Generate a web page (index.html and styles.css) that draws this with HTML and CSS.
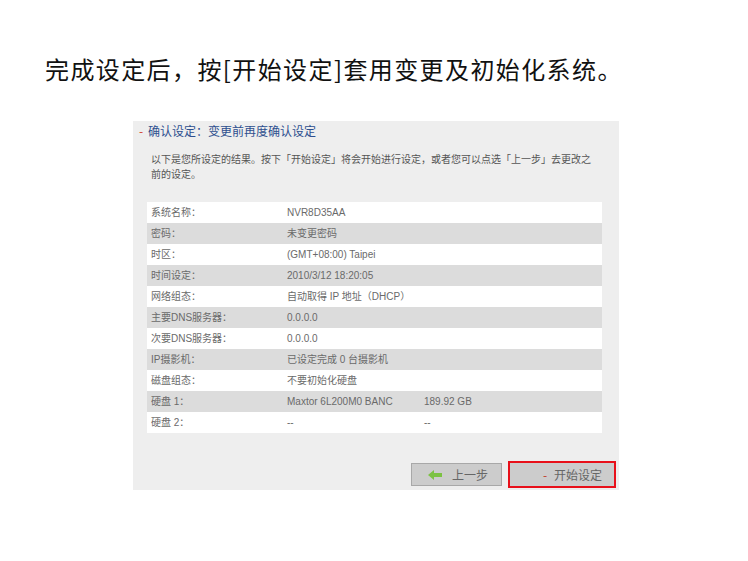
FILE: index.html
```html
<!DOCTYPE html>
<html lang="zh-CN">
<head>
  <meta charset="UTF-8">
  <title>确认设定</title>
  <link rel="stylesheet" href="styles.css">
</head>
<body>
  <h1 class="intro">完成设定后，按[开始设定]套用变更及初始化系统。</h1>

  <div class="panel">
    <div class="panel-title"><span class="dash">-</span>确认设定：变更前再度确认设定</div>
    <p class="note">以下是您所设定的结果。按下「开始设定」将会开始进行设定，或者您可以点选「上一步」去更改之前的设定。</p>

    <table class="summary">
      <tr><td class="label">系统名称：</td><td class="val">NVR8D35AA</td><td></td></tr>
      <tr><td class="label">密码：</td><td class="val">未变更密码</td><td></td></tr>
      <tr><td class="label">时区：</td><td class="val">(GMT+08:00) Taipei</td><td></td></tr>
      <tr><td class="label">时间设定：</td><td class="val">2010/3/12 18:20:05</td><td></td></tr>
      <tr><td class="label">网络组态：</td><td class="val">自动取得 IP 地址（DHCP）</td><td></td></tr>
      <tr><td class="label">主要DNS服务器：</td><td class="val">0.0.0.0</td><td></td></tr>
      <tr><td class="label">次要DNS服务器：</td><td class="val">0.0.0.0</td><td></td></tr>
      <tr><td class="label">IP摄影机：</td><td class="val">已设定完成 0 台摄影机</td><td></td></tr>
      <tr><td class="label">磁盘组态：</td><td class="val">不要初始化硬盘</td><td></td></tr>
      <tr><td class="label">硬盘 1：</td><td class="val">Maxtor 6L200M0 BANC</td><td>189.92 GB</td></tr>
      <tr><td class="label">硬盘 2：</td><td class="val">--</td><td>--</td></tr>
    </table>

    <div class="actions">
      <button class="btn btn-back">
        <svg width="14" height="10" viewBox="0 0 14 10"><path d="M0 5 L6 0 L6 3 L14 3 L14 7 L6 7 L6 10 Z" fill="#7cc242"/></svg>
        上一步
      </button>
      <button class="btn btn-start"><span class="mark">-</span>开始设定</button>
    </div>
  </div>
</body>
</html>
```

FILE: styles.css
```css
body {
  margin: 0;
  padding: 0;
  background: #fff;
  font-family: "Noto Sans CJK SC", "Liberation Sans", sans-serif;
}
.intro {
  margin: 0;
  padding: 55px 0 0 45px;
  font-size: 24px;
  font-weight: normal;
  line-height: 28px;
  letter-spacing: 1.4px;
  color: #111;
}
.panel {
  width: 486px;
  height: 369px;
  margin: 38px 0 0 133px;
  background: #eeeeee;
  box-sizing: border-box;
  padding: 2px 17px 0 14px;
  display: flex;
  flex-direction: column;
}
.panel-title {
  font-size: 12px;
  line-height: 16px;
  color: #2d4f8f;
  margin-left: -13px;
}
.panel-title .dash {
  color: #d23a2a;
  display: inline-block;
  width: 14px;
  text-align: center;
}
.note {
  margin: 12px 8px 0 4px;
  font-size: 10px;
  line-height: 15px;
  color: #555;
}
.summary {
  width: 455px;
  margin-top: 21px;
  border-collapse: collapse;
  font-family: "Liberation Sans", "Noto Sans CJK SC", sans-serif;
  font-size: 10px;
  color: #6a6a6a;
}
.summary td {
  height: 21px;
  padding: 0;
  line-height: 21px;
  background: #fff;
}
.summary tr:nth-child(even) td {
  background: #dcdcdc;
}
.summary .label {
  width: 140px;
  padding-left: 4px;
  box-sizing: border-box;
}
.summary .val {
  width: 137px;
}
.actions {
  margin-top: auto;
  margin-bottom: 2px;
  margin-right: -14px;
  display: flex;
  justify-content: flex-end;
  align-items: center;
  gap: 6px;
}
.btn {
  font-family: "Noto Sans CJK SC", "Liberation Sans", sans-serif;
  font-size: 12px;
  color: #666;
  background: #cccccc;
  border: 1px solid #a8a8a8;
  padding: 0;
  display: flex;
  align-items: center;
}
.btn-back {
  width: 91px;
  height: 23px;
  padding-left: 16px;
  gap: 10px;
}
.btn-start {
  width: 108px;
  height: 27px;
  border: 2px solid #e8101a;
  padding-left: 26px;
}
.btn-start .mark {
  color: #c0392b;
  width: 18px;
}
```
